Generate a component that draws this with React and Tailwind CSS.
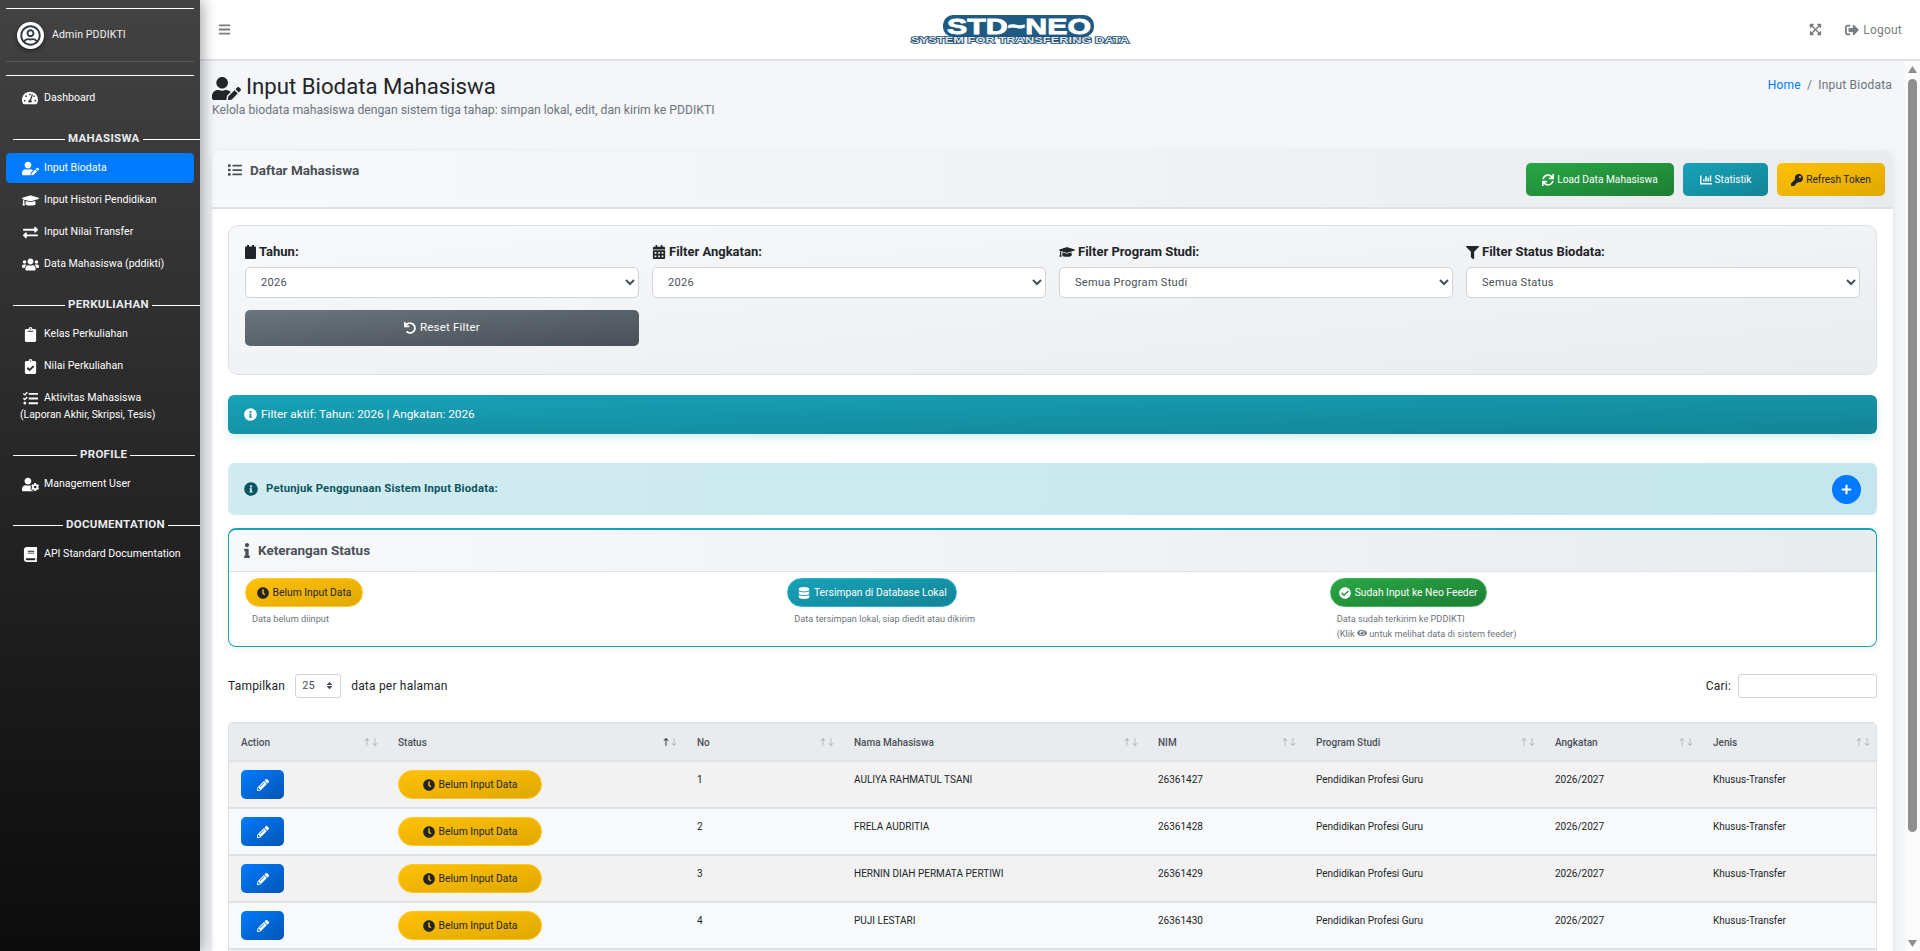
import React from 'react';
import {
  FaRegUserCircle, FaTachometerAlt, FaUserEdit, FaGraduationCap, FaExchangeAlt, FaUsers, FaClipboard,
  FaClipboardCheck, FaTasks, FaUserCog, FaBook, FaBars, FaExpandArrowsAlt, FaSignOutAlt, FaList, FaSync,
  FaChartBar, FaKey, FaCalendarAlt, FaFilter, FaUndo, FaInfoCircle, FaInfo, FaClock, FaDatabase,
  FaCheckCircle, FaEye, FaPlus, FaPencilAlt, FaSort,
} from 'react-icons/fa';
import { FaArrowUpLong, FaArrowDownLong } from 'react-icons/fa6';

const font = "font-['Roboto',sans-serif]";

function SolidCalendar() {
  return (
    <svg width="11" height="14" viewBox="0 0 11 14" fill="currentColor" className="block">
      <path d="M2 0h2v1.5h3V0h2v1.5h1a1 1 0 0 1 1 1V13a1 1 0 0 1-1 1H1a1 1 0 0 1-1-1V2.500a1 1 0 0 1 1-1h1z" />
    </svg>
  );
}

function Section({ label, left, right, top }) {
  return (
    <div className={`flex items-center h-[16px] pl-[13px] -ml-[6px] -mr-[6px] ${top}`}>
      <span className={`h-px bg-white ${left}`} />
      <span className="px-[3px] text-[11.5px] leading-none font-bold tracking-[0.3px] text-[#e9ecef] whitespace-nowrap">{label}</span>
      <span className={`h-px bg-white ${right}`} />
    </div>
  );
}

function NavItem({ icon: Icon, label, active, size = 15 }) {
  return (
    <div className={`flex items-center h-[30px] mb-[2px] rounded-[4px] text-[10.6px] text-white ${active ? 'bg-[#007bff]' : ''}`}>
      <span className="w-[38px] flex justify-center pl-[10px]"><Icon size={size} /></span>
      <span className="whitespace-nowrap">{label}</span>
    </div>
  );
}

function Sidebar() {
  return (
    <aside className="w-[200px] shrink-0 h-full bg-gradient-to-b from-[#434343] to-[#0c0c0c] shadow-[4px_0_12px_rgba(0,0,0,0.3)] z-10 pt-[8px] px-[6px]">
      <div className="h-px bg-white" />
      <div className="flex items-center h-[53px] pl-[11px] gap-[8px] border-b border-[#4f5962]">
        <span className="w-[27px] h-[27px] rounded-full bg-white flex items-center justify-center shadow-[0_2px_4px_rgba(0,0,0,0.5)]">
          <FaRegUserCircle size={21} className="text-[#343a40]" />
        </span>
        <span className="text-[10.6px] tracking-[0.1px] text-[#f2f2f2]">Admin PDDIKTI</span>
      </div>
      <div className="h-px bg-white mt-[13px]" />
      <div className="mt-[7px]"><NavItem icon={FaTachometerAlt} label="Dashboard" size={16} /></div>
      <Section label="MAHASISWA" left="w-[52px]" right="flex-1" top="mt-[18px]" />
      <div className="mt-[6px]">
        <NavItem icon={FaUserEdit} label="Input Biodata" active size={17} />
        <NavItem icon={FaGraduationCap} label="Input Histori Pendidikan" size={17} />
        <NavItem icon={FaExchangeAlt} label="Input Nilai Transfer" />
        <NavItem icon={FaUsers} label="Data Mahasiswa (pddikti)" size={17} />
      </div>
      <Section label="PERKULIAHAN" left="w-[52px]" right="flex-1" top="mt-[18px]" />
      <div className="mt-[6px]">
        <NavItem icon={FaClipboard} label="Kelas Perkuliahan" />
        <NavItem icon={FaClipboardCheck} label="Nilai Perkuliahan" />
        <NavItem icon={FaTasks} label="Aktivitas Mahasiswa" />
        <div className="text-[10.4px] text-white pl-[14px] -mt-[8px] leading-[16px]">(Laporan Akhir, Skripsi, Tesis)</div>
      </div>
      <Section label="PROFILE" left="w-[64px]" right="w-[65px]" top="mt-[24px]" />
      <div className="mt-[6px]"><NavItem icon={FaUserCog} label="Management User" size={17} /></div>
      <Section label="DOCUMENTATION" left="w-[50px]" right="flex-1" top="mt-[18px]" />
      <div className="mt-[6px]"><NavItem icon={FaBook} label="API Standard Documentation" /></div>
    </aside>
  );
}

function Logo() {
  return (
    <svg width="224" height="36" viewBox="0 0 224 36" className="block">
      <rect x="35" y="3" width="151" height="22" rx="10" fill="#1f5a82" />
      <text x="111" y="22" textAnchor="middle" textLength="144" lengthAdjust="spacingAndGlyphs"
        fontFamily="Liberation Sans, sans-serif" fontWeight="700" fontSize="22" fill="#fff" stroke="#fff" strokeWidth="0.8">STD~NEO</text>
      <text x="112" y="31" textAnchor="middle" textLength="218" lengthAdjust="spacingAndGlyphs"
        fontFamily="Liberation Sans, sans-serif" fontWeight="700" fontSize="9.5" fill="#dfe6ec" stroke="#1f4f72" strokeWidth="1.6" paintOrder="stroke">SYSTEM FOR TRANSFERING DATA</text>
    </svg>
  );
}

function Navbar() {
  return (
    <header className="h-[61px] shrink-0 bg-white border-b-2 border-[#dee2e6] flex items-center pl-[18px] pr-[18px] text-[#7a7d80]">
      <FaBars size={13} />
      <div className="flex-1 flex justify-center"><Logo /></div>
      <FaExpandArrowsAlt size={13} className="mr-[23px]" />
      <span className="flex items-center gap-[4px] text-[12px] tracking-[0.2px]"><FaSignOutAlt size={14} />Logout</span>
    </header>
  );
}

function Btn({ icon: Icon, children, cls }) {
  return (
    <button className={`h-[33px] rounded-[5px] flex items-center justify-center gap-[3px] text-[10.2px] ${cls}`}>
      <Icon size={12} />{children}
    </button>
  );
}

function Filter({ icon, label, value }) {
  return (
    <div>
      <label className="flex items-center gap-[3px] h-[16px] text-[13px] font-bold text-[#212529]">{icon}{label}</label>
      <select defaultValue={value} className="mt-[7px] w-full h-[31px] bg-white border border-[#ced4da] rounded-[5px] pl-[11px] pr-[2px] text-[11px] tracking-[0.3px] text-[#495057]">
        <option>{value}</option>
      </select>
    </div>
  );
}

function StatusBadge({ icon: Icon, children, cls, w }) {
  return (
    <span className={`inline-flex items-center justify-center gap-[4px] rounded-full border text-[10.3px] h-[29px] ${cls} ${w}`}>
      <Icon size={12} />{children}
    </span>
  );
}

const yellow = 'bg-gradient-to-br from-[#ffc107] to-[#e0a800] border-[#ffc720] text-[#212529]';

const columns = [
  ['Action', 'w-[157px]'], ['Status', 'w-[299px]', true], ['No', 'w-[157px]'], ['Nama Mahasiswa', 'w-[304px]'],
  ['NIM', 'w-[158px]'], ['Program Studi', 'w-[239px]'], ['Angkatan', 'w-[158px]'], ['Jenis', 'w-[177px]'],
];

const rows = [
  [1, 'AULIYA RAHMATUL TSANI', '26361427'],
  [2, 'FRELA AUDRITIA', '26361428'],
  [3, 'HERNIN DIAH PERMATA PERTIWI', '26361429'],
  [4, 'PUJI LESTARI', '26361430'],
];

function Table() {
  return (
    <div className="mt-[24px] rounded-t-[5px] border-x border-t-2 border-[#dee2e6] overflow-hidden">
      <table className="w-full table-fixed border-collapse text-[10px]">
        <thead>
          <tr className="h-[37px] bg-[#e9ecef] border-b-2 border-[#dee2e6]">
            {columns.map(([label, w, sorted]) => (
              <th key={label} className={`${w} pl-[12px] pr-[7px] text-left font-medium text-[10px] text-[#495057]`}>
                <div className="flex items-center justify-between">
                  <span>{label}</span>
                  <span className="flex text-[#b4b8bc]">
                    <FaArrowUpLong size={8} className={sorted ? 'text-[#343a40]' : ''} />
                    <FaArrowDownLong size={8} />
                  </span>
                </div>
              </th>
            ))}
          </tr>
        </thead>
        <tbody>
          {rows.map(([no, nama, nim], i) => (
            <tr key={no} className={`h-[47px] border-b-2 border-[#dee2e6] align-top text-[#212529] ${i % 2 === 0 ? 'bg-[#f2f2f2]' : 'bg-[#f8f9fa]'}`}>
              <td className="pl-[12px] pt-[8px]">
                <button className="w-[43px] h-[29px] rounded-[5px] bg-gradient-to-br from-[#007bff] to-[#0056b3] text-white flex items-center justify-center"><FaPencilAlt size={12} /></button>
              </td>
              <td className="pl-[12px] pt-[8px]">
                <StatusBadge icon={FaClock} cls={yellow} w="w-[144px]">Belum Input Data</StatusBadge>
              </td>
              <td className="pl-[12px] pt-[10px]">{no}</td>
              <td className="pl-[12px] pt-[10px]">{nama}</td>
              <td className="pl-[12px] pt-[10px]">{nim}</td>
              <td className="pl-[12px] pt-[10px]">Pendidikan Profesi Guru</td>
              <td className="pl-[12px] pt-[10px]">2026/2027</td>
              <td className="pl-[12px] pt-[10px]">Khusus-Transfer</td>
            </tr>
          ))}
          <tr className="h-[47px] bg-[#f2f2f2]"><td colSpan={8} /></tr>
        </tbody>
      </table>
    </div>
  );
}

function Scrollbar() {
  return (
    <div className="w-[15px] shrink-0 h-full bg-[#fbfbfb] flex flex-col items-center pt-[5px] pb-[4px]">
      <svg width="9" height="7" viewBox="0 0 9 7" className="block"><path d="M4.500 0 9 7H0z" fill="#8f8f8f" /></svg>
      <div className="mt-[6px] w-[9px] h-[753px] rounded-[5px] bg-[#8f8f8f]" />
      <svg width="9" height="7" viewBox="0 0 9 7" className="block mt-auto"><path d="M0 0h9L4.500 7z" fill="#8f8f8f" /></svg>
    </div>
  );
}

function Main() {
  return (
    <div className="flex-1 min-h-0 flex">
      <main className="flex-1 min-w-0 overflow-hidden bg-[#f4f6f9] px-[12px]">
        <div className="flex justify-between pt-[14px]">
          <div>
            <h1 className="flex items-center gap-[5px] h-[26px] text-[22.2px] font-normal text-[#212529]"><FaUserEdit size={29} /><span className="-mt-[2px]">Input Biodata Mahasiswa</span></h1>
            <p className="leading-[18px] text-[12.2px] text-[#6c757d]">Kelola biodata mahasiswa dengan sistem tiga tahap: simpan lokal, edit, dan kirim ke PDDIKTI</p>
          </div>
          <div className="mr-px pt-px text-[12px] tracking-[0.2px] text-[#6c757d]"><span className="text-[#007bff]">Home</span> <span className="mx-[3px]">/</span> Input Biodata</div>
        </div>

        <section className="mt-[32px] bg-white rounded-[8px] shadow-[0_2px_10px_rgba(0,0,0,0.08)]">
          <div className="h-[58px] rounded-t-[8px] bg-gradient-to-r from-[#f8f9fa] to-[#e9ecef] border-b-2 border-[#dee2e6] flex justify-between pl-[16px] pr-[8px] pt-[12px]">
            <div className="flex items-start gap-[8px] h-[16px] leading-[14px] text-[13.5px] font-bold text-[#495057]">
              <FaList size={14} />Daftar Mahasiswa
            </div>
            <div className="flex gap-[9px]">
              <Btn icon={FaSync} cls="w-[148px] bg-gradient-to-br from-[#28a745] to-[#1e7e34] text-white">Load Data Mahasiswa</Btn>
              <Btn icon={FaChartBar} cls="w-[85px] bg-gradient-to-br from-[#17a2b8] to-[#138496] text-white">Statistik</Btn>
              <Btn icon={FaKey} cls="w-[108px] bg-gradient-to-br from-[#ffc107] to-[#e0a800] text-[#212529]">Refresh Token</Btn>
            </div>
          </div>

          <div className="px-[16px] pt-[16px]">
            <div className="h-[150px] rounded-[10px] border border-[#dee2e6] bg-gradient-to-br from-[#f8f9fa] to-[#e9ecef] px-[16px] pt-[18px]">
              <div className="grid grid-cols-4 gap-[13px]">
                <Filter icon={<SolidCalendar />} label="Tahun:" value="2026" />
                <Filter icon={<FaCalendarAlt size={14} />} label="Filter Angkatan:" value="2026" />
                <Filter icon={<FaGraduationCap size={16} />} label="Filter Program Studi:" value="Semua Program Studi" />
                <Filter icon={<FaFilter size={13} />} label="Filter Status Biodata:" value="Semua Status" />
              </div>
              <div className="grid grid-cols-4 gap-[13px] mt-[12px]">
                <button className="h-[36px] rounded-[5px] bg-gradient-to-br from-[#6c757d] to-[#495057] text-white text-[11.5px] tracking-[0.2px] flex items-center justify-center gap-[4px]"><FaUndo size={12} />Reset Filter</button>
              </div>
            </div>

            <div className="mt-[20px] h-[39px] rounded-[6px] bg-gradient-to-br from-[#17a2b8] to-[#138496] shadow-[0_4px_8px_rgba(23,162,184,0.18)] text-white text-[11.8px] flex items-center gap-[4px] pl-[16px]">
              <FaInfoCircle size={13} />Filter aktif: Tahun: 2026 | Angkatan: 2026
            </div>

            <div className="mt-[29px] h-[52px] rounded-[6px] bg-gradient-to-r from-[#d1ecf1] to-[#c4e6ec] text-[#0c5460] text-[11.3px] font-bold tracking-[0.2px] flex items-center pl-[16px] pr-[16px]">
              <FaInfoCircle size={14} className="mr-[8px]" />Petunjuk Penggunaan Sistem Input Biodata:
              <button className="ml-auto w-[29px] h-[29px] rounded-full bg-[#007bff] text-white flex items-center justify-center"><FaPlus size={11} /></button>
            </div>

            <div className="mt-[13px] h-[119px] rounded-[8px] border border-[#17a2b8] border-t-2 shadow-[0_2px_8px_rgba(0,0,0,0.06)]">
              <div className="h-[42px] rounded-t-[8px] bg-gradient-to-r from-[#f8f9fa] to-[#e9ecef] border-b border-[#dee2e6] flex items-center gap-[8px] pl-[15px] text-[13.5px] font-bold text-[#495057]">
                <FaInfo className="w-[6px] h-[15px]" />Keterangan Status
              </div>
              <div className="grid grid-cols-3 gap-[13px] pl-[16px] pr-[17px] pt-[6px]">
                <div>
                  <StatusBadge icon={FaClock} cls={yellow} w="w-[118px]">Belum Input Data</StatusBadge>
                  <p className="pl-[7px] mt-[4px] text-[9.2px] leading-[15px] text-[#6c757d]">Data belum diinput</p>
                </div>
                <div>
                  <StatusBadge icon={FaDatabase} cls="bg-gradient-to-br from-[#17a2b8] to-[#138496] border-[#2bb5ca] text-white" w="w-[170px]">Tersimpan di Database Lokal</StatusBadge>
                  <p className="pl-[7px] mt-[4px] text-[9.2px] leading-[15px] text-[#6c757d]">Data tersimpan lokal, siap diedit atau dikirim</p>
                </div>
                <div>
                  <StatusBadge icon={FaCheckCircle} cls="bg-gradient-to-br from-[#28a745] to-[#1e7e34] border-[#3cb45a] text-white" w="w-[157px]">Sudah Input ke Neo Feeder</StatusBadge>
                  <p className="pl-[7px] mt-[4px] text-[9.2px] leading-[15px] text-[#6c757d]">Data sudah terkirim ke PDDIKTI<br />(Klik <FaEye size={10} className="inline align-[-1px]" /> untuk melihat data di sistem feeder)</p>
                </div>
              </div>
            </div>

            <div className="mt-[27px] flex items-center justify-between h-[24px] text-[12px] tracking-[0.2px] text-[#212529]">
              <div className="flex items-center gap-[10px]">
                <span>Tampilkan</span>
                <span className="relative inline-block">
                  <select defaultValue="25" className="appearance-none block w-[46px] h-[24px] rounded-[3px] border border-[#ced4da] bg-white pl-[6px] text-[11px] text-[#495057]"><option>25</option></select>
                  <FaSort size={9} className="absolute right-[7px] top-[7px] text-[#495057]" />
                </span>
                <span>data per halaman</span>
              </div>
              <div className="flex items-center gap-[7px]">
                <span>Cari:</span>
                <input className="w-[139px] h-[24px] rounded-[3px] border border-[#ced4da] bg-white" />
              </div>
            </div>

            <Table />
          </div>
        </section>
      </main>
      <Scrollbar />
    </div>
  );
}

export default function App() {
  return (
    <div className={`flex h-screen w-full overflow-hidden ${font}`}>
      <Sidebar />
      <div className="flex-1 min-w-0 flex flex-col h-full">
        <Navbar />
        <Main />
      </div>
    </div>
  );
}
